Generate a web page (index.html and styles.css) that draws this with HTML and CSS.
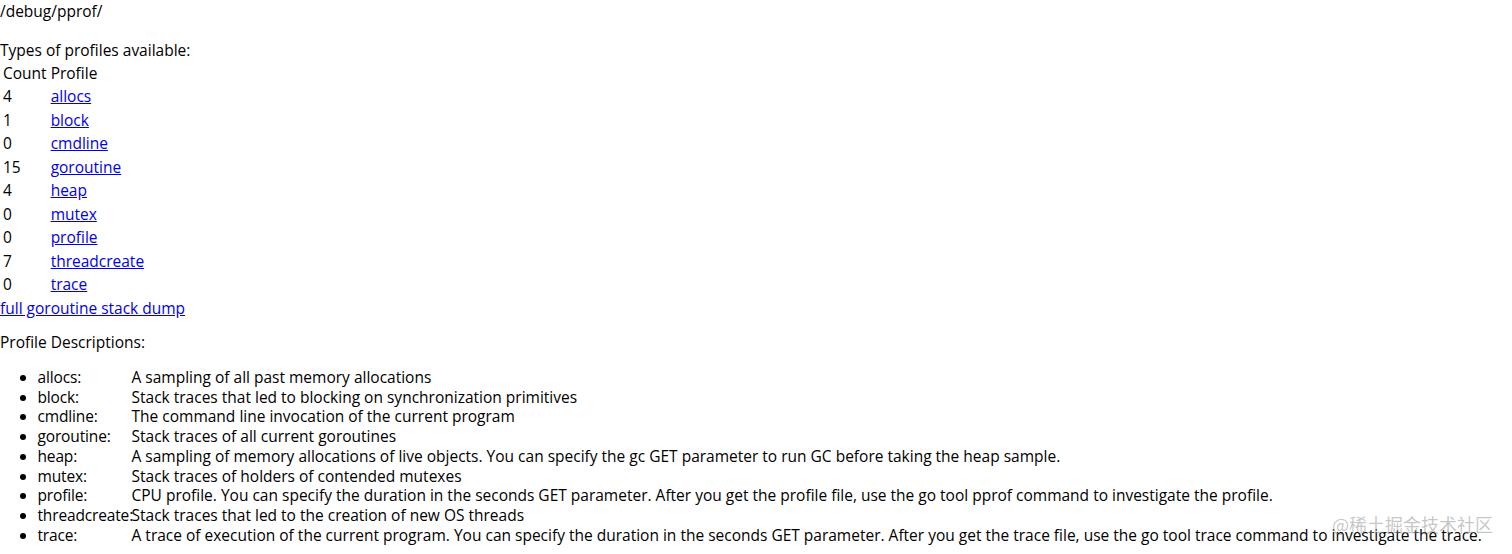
FILE: index.html
```html
<!DOCTYPE html>
<html>
<head>
<meta charset="utf-8">
<title>/debug/pprof/</title>
<link rel="stylesheet" href="styles.css">
</head>
<body>
/debug/pprof/<br>
<br>
Types of profiles available:
<table class="profiles">
<thead><tr><td>Count</td><td>Profile</td></tr></thead>
<tbody>
<tr><td>4</td><td><a href="#">allocs</a></td></tr>
<tr><td>1</td><td><a href="#">block</a></td></tr>
<tr><td>0</td><td><a href="#">cmdline</a></td></tr>
<tr><td>15</td><td><a href="#">goroutine</a></td></tr>
<tr><td>4</td><td><a href="#">heap</a></td></tr>
<tr><td>0</td><td><a href="#">mutex</a></td></tr>
<tr><td>0</td><td><a href="#">profile</a></td></tr>
<tr><td>7</td><td><a href="#">threadcreate</a></td></tr>
<tr><td>0</td><td><a href="#">trace</a></td></tr>
</tbody>
</table>
<a href="#">full goroutine stack dump</a>
<br>
<p class="desc-title">Profile Descriptions:</p>
<ul class="desc">
<li><div class="profile-name">allocs: </div> A sampling of all past memory allocations</li>
<li><div class="profile-name">block: </div> Stack traces that led to blocking on synchronization primitives</li>
<li><div class="profile-name">cmdline: </div> The command line invocation of the current program</li>
<li><div class="profile-name">goroutine: </div> Stack traces of all current goroutines</li>
<li><div class="profile-name">heap: </div> A sampling of memory allocations of live objects. You can specify the gc GET parameter to run GC before taking the heap sample.</li>
<li><div class="profile-name">mutex: </div> Stack traces of holders of contended mutexes</li>
<li><div class="profile-name">profile: </div> CPU profile. You can specify the duration in the seconds GET parameter. After you get the profile file, use the go tool pprof command to investigate the profile.</li>
<li><div class="profile-name">threadcreate: </div> Stack traces that led to the creation of new OS threads</li>
<li><div class="profile-name">trace: </div> A trace of execution of the current program. You can specify the duration in the seconds GET parameter. After you get the trace file, use the go tool trace command to investigate the trace.</li>
</ul>
<div class="watermark">@稀土掘金技术社区</div>
</body>
</html>
```
FILE: styles.css
```css
html {
  font-size: 15px;
}
body {
  margin: 2px 0 0 0;
  font-family: "Open Sans", "Noto Sans CJK SC", sans-serif;
  font-size: 15.5px;
  line-height: 19.6px;
  color: #000;
  background: #fff;
  position: relative;
  min-height: 552px;
}
a {
  color: #0000ee;
}
.profiles {
  border-spacing: 2px;
  font-size: 15.5px;
  line-height: 19.5px;
  margin-bottom: 1px;
}
.profiles td {
  padding: 1px;
}
.desc-title {
  margin: 15px 0 0 0;
}
.desc {
  margin: 15px 0;
  padding-left: 37.5px;
  line-height: 19.75px;
}
.profile-name {
  display: inline-block;
  width: 90px;
  letter-spacing: -0.15px;
}
.watermark {
  position: absolute;
  right: 19px;
  top: 511px;
  font-family: "Noto Sans CJK SC", sans-serif;
  font-size: 18px;
  line-height: 23px;
  color: rgba(150, 150, 150, 0.55);
  pointer-events: none;
}
```
